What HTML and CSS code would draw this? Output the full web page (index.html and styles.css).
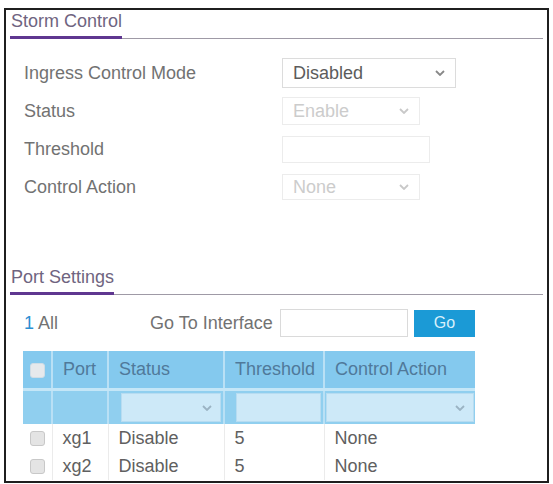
FILE: index.html
```html
<!DOCTYPE html>
<html>
<head>
<meta charset="utf-8">
<link rel="stylesheet" href="styles.css">
</head>
<body>
<div class="frame">
  <div class="head"><span class="head-title">Storm Control</span></div>
  <div class="form">
    <div class="row">
      <div class="label">Ingress Control Mode</div>
      <div class="sel sel-main"><span>Disabled</span><svg class="chev" viewBox="0 0 10 6"><path d="M1 1 L5 5 L9 1" /></svg></div>
    </div>
    <div class="row">
      <div class="label">Status</div>
      <div class="sel sel-dis"><span>Enable</span><svg class="chev" viewBox="0 0 10 6"><path d="M1 1 L5 5 L9 1" /></svg></div>
    </div>
    <div class="row">
      <div class="label">Threshold</div>
      <div class="inp-dis"></div>
    </div>
    <div class="row">
      <div class="label">Control Action</div>
      <div class="sel sel-dis sel-short"><span>None</span><svg class="chev" viewBox="0 0 10 6"><path d="M1 1 L5 5 L9 1" /></svg></div>
    </div>
  </div>

  <div class="head head-port"><span class="head-title">Port Settings</span></div>

  <div class="toolbar">
    <div class="count"><span class="num">1</span> All</div>
    <div class="goto">Go To Interface</div>
    <div class="goto-inp"></div>
    <div class="go">Go</div>
  </div>

  <table class="ports">
    <colgroup>
      <col class="c-chk"><col class="c-port"><col class="c-status"><col class="c-thr"><col class="c-act">
    </colgroup>
    <thead>
      <tr class="hdr">
        <th><span class="cb cb-head"></span></th>
        <th>Port</th>
        <th>Status</th>
        <th>Threshold</th>
        <th>Control Action</th>
      </tr>
      <tr class="filter">
        <td></td>
        <td></td>
        <td><div class="fsel f-status"><svg class="chev" viewBox="0 0 10 6"><path d="M1 1 L5 5 L9 1" /></svg></div></td>
        <td><div class="fsel f-thr"></div></td>
        <td><div class="fsel f-act"><svg class="chev" viewBox="0 0 10 6"><path d="M1 1 L5 5 L9 1" /></svg></div></td>
      </tr>
    </thead>
    <tbody>
      <tr>
        <td><span class="cb"></span></td>
        <td>xg1</td>
        <td>Disable</td>
        <td>5</td>
        <td>None</td>
      </tr>
      <tr>
        <td><span class="cb"></span></td>
        <td>xg2</td>
        <td>Disable</td>
        <td>5</td>
        <td>None</td>
      </tr>
    </tbody>
  </table>
</div>
</body>
</html>
```

FILE: styles.css
```css
html, body {
  margin: 0;
  padding: 0;
  background: #ffffff;
}

body {
  font-family: "Liberation Sans", Arial, sans-serif;
  font-size: 18px;
  color: #707070;
}

.frame {
  box-sizing: border-box;
  margin: 8px 0 0 4px;
  width: 545px;
  height: 475px;
  border: 2px solid #1f1f1f;
  padding: 0 4px;
  overflow: hidden;
}

.head {
  border-bottom: 1px solid #9f9aa6;
  height: 28px;
}

.head-title {
  display: inline-block;
  line-height: 22px;
  padding: 0 0 4px 1px;
  color: #6f6480;
  border-bottom: 3px solid #5f3790;
}

.form {
  margin-top: 15px;
  padding-left: 14px;
}

.row {
  display: flex;
  align-items: center;
  height: 38px;
}

.label {
  width: 258px;
  color: #727272;
}

.sel {
  box-sizing: border-box;
  display: flex;
  align-items: center;
  justify-content: space-between;
  padding: 0 10px 0 10px;
}

.sel-main {
  width: 174px;
  height: 30px;
  border: 1px solid #dcdcdc;
  color: #5c5c5c;
}

.sel-dis {
  width: 138px;
  height: 28px;
  border: 1px solid #ececec;
  color: #cccccc;
}

.sel-short {
  height: 26px;
}

.inp-dis {
  box-sizing: border-box;
  width: 148px;
  height: 27px;
  border: 1px solid #ececec;
}

.chev {
  width: 10px;
  height: 6px;
  fill: none;
  stroke: #888888;
  stroke-width: 1.8;
}

.sel-dis .chev {
  stroke: #c8c8c8;
}

.head-port {
  margin-top: 60px;
}

.toolbar {
  display: flex;
  align-items: center;
  margin-top: 14px;
  height: 28px;
  padding-left: 14px;
}

.count {
  width: 126px;
  color: #727272;
}

.num {
  color: #2c8fd2;
}

.goto {
  width: 130px;
  color: #727272;
}

.goto-inp {
  box-sizing: border-box;
  width: 128px;
  height: 28px;
  border: 1px solid #dadada;
}

.go {
  box-sizing: border-box;
  margin-left: 6px;
  width: 61px;
  height: 27px;
  background: #1b9ad6;
  color: #d8f0fb;
  font-size: 16px;
  display: flex;
  align-items: center;
  justify-content: center;
}

.ports {
  margin: 14px 0 0 13px;
  border-collapse: collapse;
  table-layout: fixed;
  width: 452px;
}

.c-chk { width: 29px; }
.c-port { width: 56px; }
.c-status { width: 116px; }
.c-thr { width: 100px; }
.c-act { width: 151px; }

.ports th,
.ports td {
  padding: 0 0 0 10px;
  text-align: left;
  font-weight: normal;
  white-space: nowrap;
}

.hdr th {
  height: 37px;
  background: #84c9ee;
  color: #50799a;
  border-left: 2px solid #b9e0f5;
  border-bottom: 3px solid #c4e6f7;
}

.hdr th:first-child,
.filter td:first-child {
  border-left: none;
  padding: 0;
  text-align: center;
}

.filter td {
  height: 33px;
  background: #90cfef;
  border-left: 2px solid #b9e0f5;
  padding: 0;
}

.fsel {
  box-sizing: border-box;
  height: 29px;
  background: #cde9f8;
  border: 1px solid #b7dcf1;
  display: flex;
  align-items: center;
  justify-content: flex-end;
  padding-right: 8px;
}

.f-status {
  margin: 0 2px 0 12px;
}

.f-thr {
  margin: 0 2px 0 11px;
}

.f-act {
  margin: 0 1px 0 1px;
}

.fsel .chev {
  stroke: #9ab3c3;
}

.ports tbody td {
  height: 28px;
  color: #606060;
  border-left: 1px solid #ebebeb;
}

.ports tbody td:first-child {
  border-left: none;
  padding: 0;
  text-align: center;
}

.cb {
  display: inline-block;
  box-sizing: border-box;
  width: 15px;
  height: 15px;
  border: 1px solid #c8c8c8;
  border-radius: 3px;
  background: #e4e4e4;
  vertical-align: middle;
}

.cb-head {
  background: #e6e9ec;
  border-color: #d0dde6;
}
```
